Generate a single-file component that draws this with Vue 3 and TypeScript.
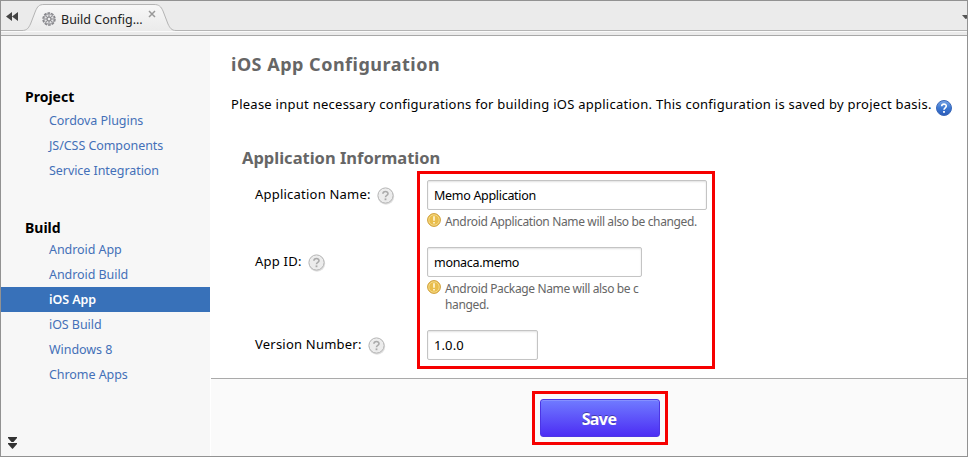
<script setup lang="ts">
interface NavGroup {
  title: string
  items: string[]
}

interface Field {
  id: string
  label: string
  value: string
  hint?: string[]
}

const groups: NavGroup[] = [
  { title: 'Project', items: ['Cordova Plugins', 'JS/CSS Components', 'Service Integration'] },
  {
    title: 'Build',
    items: ['Android App', 'Android Build', 'iOS App', 'iOS Build', 'Windows 8', 'Chrome Apps'],
  },
]
const current = 'iOS App'

const fields: Field[] = [
  {
    id: 'name',
    label: 'Application Name:',
    value: 'Memo Application',
    hint: ['Android Application Name will also be changed.'],
  },
  {
    id: 'appid',
    label: 'App ID:',
    value: 'monaca.memo',
    hint: ['Android Package Name will also be c', 'hanged.'],
  },
  { id: 'version', label: 'Version Number:', value: '1.0.0' },
]
const spokes = [0, 45, 90, 135, 180, 225, 270, 315]
</script>

<template>
  <div class="window">
    <header class="tabs">
      <svg class="tab-line" width="966" height="35" viewBox="0 0 966 35">
        <defs>
          <linearGradient id="tabFill" x1="0" y1="0" x2="0" y2="1">
            <stop offset="0" stop-color="#f7f7f7" />
            <stop offset="1" stop-color="#ebebeb" />
          </linearGradient>
        </defs>
        <path
          d="M0 29.5H21C26 29.5 27.500 27 29.500 23L34.500 10C36.500 5.500 38 3.500 43 3.500H153C158 3.500 160 5.500 162 10L167 23C169 27 170.500 29.500 175 29.500H966"
          fill="url(#tabFill)"
          stroke="#b4b4b4"
        />
        <rect y="30" width="966" height="1" fill="#fafafa" />
        <rect y="34" width="966" height="1" fill="#a8a8a8" />
      </svg>
      <svg class="rewind" width="12" height="9" viewBox="0 0 12 9">
        <path d="M6 0V9L0 4.500ZM12 0V9L6 4.500Z" fill="#444" />
      </svg>
      <svg class="gear" width="14" height="14" viewBox="0 0 14 14">
        <circle cx="7" cy="7" r="6" fill="#e4e4e6" stroke="#85858a" stroke-width="1.500" stroke-dasharray="2.700 1.010" />
        <circle cx="7" cy="7" r="5" fill="#e4e4e6" stroke="#88888c" stroke-width=".8" />
        <path
          v-for="a in spokes"
          :key="a"
          d="M7 5V2.500"
          :transform="`rotate(${a} 7 7)`"
          stroke="#909094"
          stroke-width="1"
        />
        <circle cx="7" cy="7" r="2" fill="#eee" stroke="#77777b" />
      </svg>
      <span class="tab-title">Build Config...</span>
      <svg class="close" width="8" height="8" viewBox="0 0 8 8">
        <path d="M1 1L7 7M7 1L1 7" stroke="#999" stroke-width="1.500" />
      </svg>
      <svg class="more" width="5" height="4" viewBox="0 0 5 4">
        <path d="M0 0H5V3.500L3.500 4Z" fill="#555" />
      </svg>
    </header>

    <div class="body">
      <nav class="sidebar">
        <section v-for="g in groups" :key="g.title" class="group">
          <h3>{{ g.title }}</h3>
          <a v-for="item in g.items" :key="item" class="item" :class="{ active: item === current }">
            <span>{{ item }}</span>
          </a>
        </section>
        <svg class="collapse" width="9" height="12" viewBox="0 0 9 12">
          <path d="M0 0H9V1L5.500 5H3.500L0 1ZM0 6H9V7L5.500 11L4.500 12L3.500 11L0 7Z" fill="#333" />
        </svg>
      </nav>

      <main class="main">
        <div class="content">
          <h1>iOS App Configuration</h1>
          <div class="intro">
            <p>Please input necessary configurations for building iOS application. This configuration is saved by project basis.</p>
            <svg class="help-blue" width="16" height="16" viewBox="0 0 16 16">
              <defs>
                <linearGradient id="blueFill" x1="0" y1="0" x2="0" y2="1">
                  <stop offset="0" stop-color="#7aa6e6" />
                  <stop offset=".5" stop-color="#3c78d2" />
                  <stop offset="1" stop-color="#2a5ab8" />
                </linearGradient>
              </defs>
              <circle cx="8" cy="8" r="7.500" fill="url(#blueFill)" stroke="#3b68b8" />
              <path d="M5.700 6.300C5.700 3.400 10.400 3.400 10.300 6.100C10.300 7.900 8 7.800 8 9.800" fill="none" stroke="#fff" stroke-width="1.600" />
              <rect x="7.100" y="11" width="1.800" height="1.800" fill="#fff" />
            </svg>
          </div>

          <h2>Application Information</h2>
          <form class="form" @submit.prevent>
            <div v-for="f in fields" :key="f.id" class="row" :class="f.id">
              <label>
                <span>{{ f.label }}</span>
                <svg class="help" width="18" height="18" viewBox="0 0 18 18">
                  <circle cx="9" cy="9.500" r="8.200" fill="#000" opacity=".12" />
                  <circle cx="8.500" cy="8.500" r="7.600" fill="#ececec" stroke="#b5b5b5" />
                  <path d="M5.900 6.800C6 3.700 11.100 3.800 11 6.700C10.900 8.500 8.500 8.300 8.500 10.200" fill="none" stroke="#aaa" stroke-width="1.600" />
                  <rect x="7.600" y="11.400" width="1.800" height="1.800" fill="#aaa" />
                </svg>
              </label>
              <div class="control">
                <div class="input">{{ f.value }}</div>
                <div v-if="f.hint" class="hint">
                  <svg width="14" height="14" viewBox="0 0 14 14">
                    <circle cx="7" cy="7" r="6.400" fill="#e9bd4c" stroke="#cf9f3b" />
                    <circle cx="7" cy="7" r="5.200" fill="none" stroke="#f6dc8c" stroke-width=".9" />
                    <path d="M7 3.300V7.800M7 9V10.600" stroke="#fff8dc" stroke-width="1.600" />
                  </svg>
                  <div>
                    <div v-for="line in f.hint" :key="line">{{ line }}</div>
                  </div>
                </div>
              </div>
            </div>
          </form>
        </div>
        <footer class="footer">
          <button class="save" type="button">Save</button>
        </footer>
      </main>
    </div>
    <div class="mark mark-fields"></div>
    <div class="mark mark-save"></div>
  </div>
</template>

<style>
body {
  margin: 0;
}
</style>

<style scoped>
.window {
  position: relative;
  box-sizing: border-box;
  width: 968px;
  height: 457px;
  border: 1px solid #929292;
  background: #fff;
  font-family: 'Noto Sans', 'Open Sans', sans-serif;
  font-size: 13px;
  color: #000;
  display: flex;
  flex-direction: column;
  overflow: hidden;
}
h1, h2, h3, p {
  margin: 0;
}
svg {
  display: block;
  flex: none;
}
.tabs {
  position: relative;
  box-sizing: border-box;
  height: 35px;
  flex: none;
  background: #ebebeb;
  display: flex;
  align-items: flex-start;
  padding-left: 5px;
}
.tab-line {
  position: absolute;
  left: 0;
  top: 0;
}
.rewind {
  position: relative;
  margin-top: 11px;
}
.gear {
  position: relative;
  margin: 11px 0 0 24px;
}
.tab-title {
  position: relative;
  margin: 10px 0 0 5px;
  width: 83px;
  font-size: 12.5px;
  line-height: 18px;
  white-space: nowrap;
  color: #222;
}
.close {
  position: relative;
  margin: 9px 0 0 4px;
}
.more {
  position: relative;
  margin: 14px 0 0 auto;
}
.body {
  flex: 1;
  display: flex;
  min-height: 0;
}
.sidebar {
  width: 209px;
  flex: none;
  box-sizing: border-box;
  padding-top: 49px;
  background: #f7f7f7;
  display: flex;
  flex-direction: column;
}
.group {
  margin-bottom: 33px;
}
.group h3 {
  padding-left: 24px;
  font-size: 14px;
  line-height: 24px;
  height: 23px;
}
.group + .group h3 {
  height: 21px;
}
.item {
  display: block;
  height: 25px;
  line-height: 25px;
  padding-left: 48px;
  font-size: 12.5px;
  letter-spacing: -0.06px;
  color: #4470b8;
  white-space: nowrap;
}
.item.active {
  background: #3871b9;
  color: #fff;
  font-weight: 600;
}
.collapse {
  margin: auto 0 7px 7px;
}
.main {
  flex: 1;
  min-width: 0;
  padding-left: 1px;
  display: flex;
  flex-direction: column;
}
.content {
  flex: 1;
  padding: 15px 0 0 20px;
}
h1 {
  font-size: 18px;
  line-height: 26px;
  letter-spacing: 0.5px;
  color: #666;
}
.intro {
  display: flex;
  margin-top: 17px;
  height: 34px;
}
.intro p {
  width: 705px;
  line-height: 20px;
  letter-spacing: 0.26px;
  white-space: nowrap;
}
.help-blue {
  margin-top: 6px;
}
h2 {
  margin: 18px 0 0 11px;
  font-size: 16.5px;
  line-height: 24px;
  color: #666;
}
.form {
  padding: 10px 0 0 24px;
}
.row {
  display: flex;
  height: 67px;
}
.row.appid {
  height: 83px;
}
.row.version {
  height: 40px;
}
label {
  width: 172px;
  height: 30px;
  display: flex;
  gap: 6px;
  line-height: 28px;
  letter-spacing: 0.22px;
  white-space: nowrap;
}
label .help {
  margin-top: 7px;
}
.input {
  box-sizing: border-box;
  width: 280px;
  height: 30px;
  border: 1px solid #c4c4c4;
  border-radius: 2px;
  box-shadow: inset 0 1px 2px rgba(0, 0, 0, 0.12);
  padding-left: 6px;
  font-size: 12.5px;
  letter-spacing: -0.3px;
  line-height: 29px;
}
.appid .input {
  width: 215px;
}
.version .input {
  width: 111px;
  font-size: 13px;
  letter-spacing: 0.1px;
}
.hint {
  display: flex;
  gap: 4px;
  margin-top: 3px;
  font-size: 12px;
  line-height: 16px;
  letter-spacing: -0.36px;
  color: #666;
  white-space: nowrap;
}
.hint > div {
  padding-top: 1px;
}
.footer {
  box-sizing: border-box;
  height: 78px;
  border-top: 1px solid #aaa;
  background: #fafafa;
  padding: 20px 0 0 329px;
}
.save {
  display: block;
  box-sizing: border-box;
  width: 120px;
  height: 38px;
  padding: 2px 2px 0 0;
  border: 1px solid #4c35e4;
  border-radius: 3px;
  background: linear-gradient(#707bff, #4c2df4);
  box-shadow: inset 0 1px 0 #858fff;
  color: #fff;
  font-family: inherit;
  font-size: 16px;
  font-weight: 700;
  letter-spacing: -0.6px;
  line-height: 34px;
  text-shadow: 0 -1px 0 rgba(0, 0, 0, 0.35);
}
.mark {
  position: absolute;
  box-sizing: border-box;
  border: 3px solid #f60000;
  pointer-events: none;
}
.mark-fields {
  left: 416px;
  top: 170px;
  width: 298px;
  height: 198px;
}
.mark-save {
  left: 531px;
  top: 390px;
  width: 136px;
  height: 54px;
}
</style>
